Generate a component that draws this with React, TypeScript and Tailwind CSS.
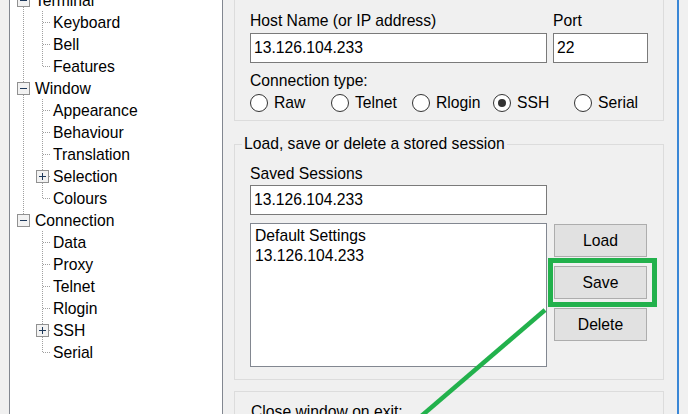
import React from "react";

type Row = {
  label: string;
  level: 0 | 1;
  box?: "minus" | "plus";
  trunk?: boolean;
  last?: boolean;
};

const rows: Row[] = [
  { label: "Terminal", level: 0, box: "minus", trunk: true },
  { label: "Keyboard", level: 1, trunk: true },
  { label: "Bell", level: 1, trunk: true },
  { label: "Features", level: 1, trunk: true, last: true },
  { label: "Window", level: 0, box: "minus", trunk: true },
  { label: "Appearance", level: 1, trunk: true },
  { label: "Behaviour", level: 1, trunk: true },
  { label: "Translation", level: 1, trunk: true },
  { label: "Selection", level: 1, trunk: true, box: "plus" },
  { label: "Colours", level: 1, trunk: true, last: true },
  { label: "Connection", level: 0, box: "minus", last: true },
  { label: "Data", level: 1 },
  { label: "Proxy", level: 1 },
  { label: "Telnet", level: 1 },
  { label: "Rlogin", level: 1 },
  { label: "SSH", level: 1, box: "plus" },
  { label: "Serial", level: 1, last: true },
];

const dot = "#a0a0a0";

const ExpandBox = ({ x, kind }: { x: number; kind: "minus" | "plus" }) => (
  <g>
    <rect x={x - 5.5} y={5.5} width={12} height={12} fill="#f2f2f2" stroke="#919191" />
    <line x1={x - 3} y1={11.5} x2={x + 4} y2={11.5} stroke="#1e395b" />
    {kind === "plus" && <line x1={x + 0.5} y1={8} x2={x + 0.5} y2={15} stroke="#1e395b" />}
  </g>
);

const TreeRow = ({ row }: { row: Row }) => {
  const w = row.level === 0 ? 25 : 43;
  return (
    <div className="flex items-center h-[22px]">
      <svg width={w} height={22} className="shrink-0" shapeRendering="crispEdges">
        {row.level === 0 && (
          <line x1={13.5} y1={0} x2={13.5} y2={row.last ? 11 : 22} stroke={dot} strokeDasharray="1 1" />
        )}
        {row.level === 1 && row.trunk && (
          <line x1={13.5} y1={0} x2={13.5} y2={22} stroke={dot} strokeDasharray="1 1" />
        )}
        {row.level === 1 && (
          <>
            <line x1={32.5} y1={0} x2={32.5} y2={row.last ? 12 : 22} stroke={dot} strokeDasharray="1 1" />
            <line x1={33} y1={11.5} x2={41} y2={11.5} stroke={dot} strokeDasharray="1 1" />
          </>
        )}
        {row.box && <ExpandBox x={row.level === 0 ? 13 : 32} kind={row.box} />}
      </svg>
      <span className="whitespace-nowrap text-black pt-px">{row.label}</span>
    </div>
  );
};

const Input = ({ value, className = "" }: { value: string; className?: string }) => (
  <div className={`h-[30px] border border-[#7a7a7a] bg-white flex items-center pl-[3px] ${className}`}>
    {value}
  </div>
);

const Radio = ({ label, checked }: { label: string; checked?: boolean }) => (
  <div className="flex items-center h-[20px]">
    <span className="w-[18px] h-[18px] rounded-full border border-[#333333] bg-white flex items-center justify-center shrink-0">
      {checked && <span className="w-[8px] h-[8px] rounded-full bg-[#333333]" />}
    </span>
    <span className="ml-[6px]">{label}</span>
  </div>
);

const Button = ({ label }: { label: string }) => (
  <div className="h-[33px] w-[93px] border border-[#adadad] bg-[#e1e1e1] flex items-center justify-center">
    {label}
  </div>
);

export default function App() {
  return (
    <div className="relative w-[688px] h-[414px] overflow-hidden flex bg-[#f0f0f0] text-[15.7px] leading-[20px] text-black font-['Liberation_Sans',Arial,sans-serif]">
      <div className="w-[9px] shrink-0" />

      {/* tree */}
      <div className="w-[214px] shrink-0 border-x border-[#828790] bg-white overflow-hidden">
        <div className="-mt-[11px]">
          {rows.map((r) => (
            <TreeRow key={r.label} row={r} />
          ))}
        </div>
      </div>

      <div className="w-[11px] shrink-0" />

      {/* panel */}
      <div className="w-[430px] shrink-0 flex flex-col">
        <div className="-mt-[10px] border border-[#dcdcdc] pt-[20px] pb-[7px] pl-[15px]">
          <div className="flex gap-[6px]">
            <div className="flex flex-col w-[297px]">
              <span>Host Name (or IP address)</span>
              <Input value="13.126.104.233" className="mt-[2px]" />
            </div>
            <div className="flex flex-col w-[95px]">
              <span>Port</span>
              <Input value="22" className="mt-[2px]" />
            </div>
          </div>
          <div className="mt-[8px]">Connection type:</div>
          <div className="mt-[2px] grid grid-cols-[repeat(5,81px)]">
            <Radio label="Raw" />
            <Radio label="Telnet" />
            <Radio label="Rlogin" />
            <Radio label="SSH" checked />
            <Radio label="Serial" />
          </div>
        </div>

        <div className="mt-[23px] border-x border-b border-[#dcdcdc] pl-[15px] pb-[12px]">
          <div className="-mt-[10px] -ml-[16px] -mr-px flex items-start h-[20px]">
            <div className="mt-[10px] h-px w-[8px] bg-[#dcdcdc]" />
            <span className="px-[2px] whitespace-nowrap">Load, save or delete a stored session</span>
            <div className="mt-[10px] h-px flex-1 bg-[#dcdcdc]" />
          </div>
          <div className="mt-[10px]">Saved Sessions</div>
          <Input value="13.126.104.233" className="mt-[1px] w-[297px]" />
          <div className="mt-[8px] flex gap-[7px]">
            <div className="w-[297px] h-[144px] border border-[#828790] bg-white pl-[4px] pt-[2px]">
              <div>Default Settings</div>
              <div>13.126.104.233</div>
            </div>
            <div className="mt-[1px] flex flex-col gap-[9px]">
              <Button label="Load" />
              <Button label="Save" />
              <Button label="Delete" />
            </div>
          </div>
        </div>

        <div className="mt-[11px] border border-[#dcdcdc] pt-[10px] pl-[16px] h-[60px]">
          <div>Close window on exit:</div>
        </div>
      </div>

      <div className="w-[13px] shrink-0" />
      <div className="w-[2px] shrink-0 bg-[#3a87d6]" />
      <div className="flex-1" />

      {/* annotation */}
      <div className="absolute left-[548px] top-[258px] w-[109px] h-[49px] border-[5px] border-[#22b14c]" />
      <svg className="absolute left-0 top-0 pointer-events-none" width={688} height={414}>
        <line x1={545} y1={310} x2={419} y2={418} stroke="#22b14c" strokeWidth={4.5} />
      </svg>
    </div>
  );
}
